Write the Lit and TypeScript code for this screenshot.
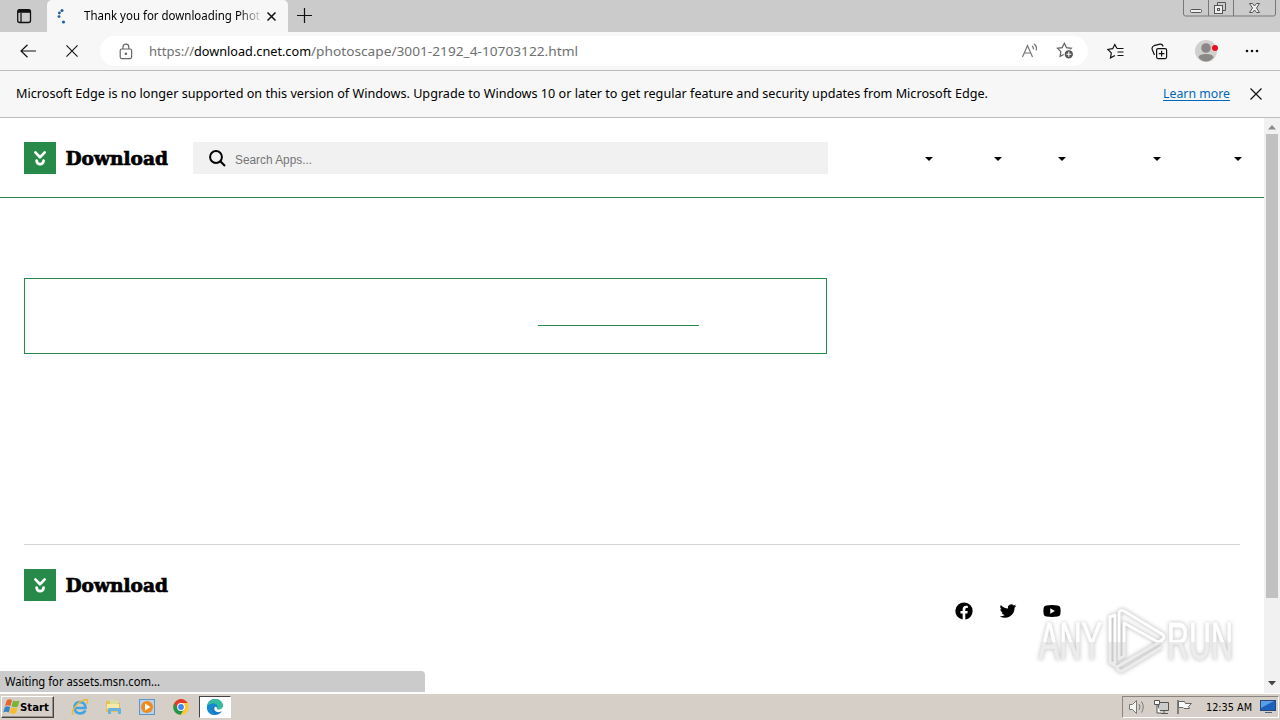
import { LitElement, css, html, svg } from 'lit';
import { customElement, property } from 'lit/decorators.js';

// One line of text set to an exact advance width.
@customElement('fit-text')
export class FitText extends LitElement {
  @property({ type: String })
  text : string = '';

  @property({ type: Number })
  width : number = 100;

  render() {
    return html`<svg width=${this.width} height="20">
      <text x="0" y="15" textLength=${this.width} lengthAdjust="spacingAndGlyphs">${this.text}</text>
    </svg>`;
  }

  static styles = css`
    :host { display: block; flex: none; height: 20px; }
    svg { display: block; overflow: visible; }
    text { fill: currentColor; white-space: pre; }
  `;
}

@customElement('download-logo')
export class DownloadLogo extends LitElement {
  render() {
    return html`
      <svg class="mark" width="32" height="32" viewBox="0 0 32 32">
        <rect width="32" height="32" fill="#278a4b"/>
        <g fill="none" stroke="#fff" stroke-width="2.7" stroke-linecap="round" stroke-linejoin="round">
          <path d="M11.4 10.4 16 15.2l4.7-4.8"/>
          <path d="M12.6 18.6c.5 4.7 6.5 4.7 7 0"/>
        </g>
      </svg>
      <svg class="word" width="104" height="32">
        <text x="0.5" y="23" textLength="102.5" lengthAdjust="spacingAndGlyphs">Download</text>
      </svg>`;
  }

  static styles = css`
    :host { display: flex; gap: 9px; width: 145px; height: 32px; flex: none; }
    .word { overflow: visible; }
    text {
      font: 700 19px "DejaVu Serif", serif;
      stroke: #000;
      stroke-width: 0.7px;
    }
  `;
}

const starPath = 'M7 1.2 8.9 5l4.3.6-3.1 3 .7 4.2L7 10.8l-3.8 2 .7-4.2-3.1-3L5.1 5z';

@customElement('browser-chrome')
export class BrowserChrome extends LitElement {
  render() {
    return html`
      <div class="tabs">
        <svg class="actions" width="16" height="16" viewBox="0 0 16 16" fill="none" stroke="#111" stroke-width="1.3">
          <rect x="1.7" y="1.7" width="12.8" height="12.8" rx="2"/>
          <path d="M2 3.3h12.4" stroke-width="3"/><path d="M5 5v9"/>
        </svg>
        <div class="tab">
          <svg class="spinner" width="16" height="16" viewBox="0 0 16 16" fill="#245f9e">
            <circle cx="7" cy="2.4" r="1.5"/><circle cx="4.4" cy="5" r="1.4"/>
            <circle cx="4" cy="8.6" r="1.4"/><circle cx="8.5" cy="14" r="1.6"/>
          </svg>
          <fit-text class="title" text="Thank you for downloading Phot" width="176"></fit-text>
          <svg class="close" width="9" height="9" viewBox="0 0 9 9" stroke="#111" stroke-width="1.5"><path d="m.5.5 8 8m0-8-8 8"/></svg>
        </div>
        <svg class="plus" width="15" height="15" viewBox="0 0 15 15" stroke="#111" stroke-width="1.2"><path d="M7.5 0v15M0 7.5h15"/></svg>
        <svg class="controls" width="94" height="17" viewBox="0 0 94 17" fill="none" stroke="#777">
          <path d="M.5 0v14q0 2 2 2h88q2 0 2-2V0M25.500 0v16M50.500 0v16"/>
          <g stroke="#555">
            <rect x="7.500" y="9.500" width="11" height="3" rx="1" fill="#eee"/>
            <path d="M34.500 5V2.500h8v8H40"/><rect x="31.500" y="5.500" width="8" height="8" fill="#eee"/>
            <rect x="34.500" y="8.500" width="2" height="2"/>
            <path d="M66.500 3.500h3l2 2.500 2-2.500h3L73.500 8l3 4.500h-3l-2-2.500-2 2.500h-3l3-4.500z" fill="#eee"/>
          </g>
        </svg>
      </div>
      <div class="toolbar">
        <svg class="back" width="17" height="14" viewBox="0 0 17 14" fill="none" stroke="#111" stroke-width="1.2"><path d="M16 7H1m6.500-6.300L1 7l6.500 6.300"/></svg>
        <svg class="stop" width="12" height="12" viewBox="0 0 13 13" stroke="#111" stroke-width="1.2"><path d="m.5.5 12 12m0-12-12 12"/></svg>
        <div class="address">
          <svg class="lock" width="14" height="17" viewBox="0 0 14 17" fill="none" stroke="#666" stroke-width="1.2">
            <rect x="1.200" y="6" width="11.400" height="9.600" rx="1.500"/><path d="M4 6V4a2.900 2.900 0 0 1 5.800 0v2"/><circle cx="6.900" cy="10.700" r=".7" fill="#666"/>
          </svg>
          <div class="url">
            <fit-text class="dim" text="https://" width="45"></fit-text>
            <fit-text text="download.cnet.com" width="117"></fit-text>
            <fit-text class="dim" text="/photoscape/3001-2192_4-10703122.html" width="267"></fit-text>
          </div>
          <svg class="read" width="17" height="16" viewBox="0 0 17 16" fill="none" stroke="#777" stroke-width="1.200">
            <path d="M1.500 14 6.500 2.500l5 11.500M3.300 10h6.400M11 3q1.800 1.300 1.300 3.300M13 .8q3.500 2.800 2 6.700"/>
          </svg>
          <svg class="fav" width="18" height="18" viewBox="0 0 18 18" fill="none" stroke="#666" stroke-width="1.100">
            <path d=${starPath} transform="translate(.5 0) scale(1.120)"/>
            <circle cx="12.800" cy="12.300" r="4.700" fill="#555" stroke="#fff"/><path d="M12.800 9.800v5m-2.500-2.500h5" stroke="#fff"/>
          </svg>
        </div>
        <svg class="favs" width="18" height="17" viewBox="0 0 18 17" fill="none" stroke="#111" stroke-width="1.200">
          <path d="M10 5.500 7.800 1.500 5.700 5.700l-4.900.8 3.500 3.400-.8 5 4.500-2.400"/><path d="M10 5.500h6.500M10.500 9h6M10.500 12.500h6"/>
        </svg>
        <svg class="collections" width="17" height="17" viewBox="0 0 17 17" fill="none" stroke="#111" stroke-width="1.200">
          <rect x="5.600" y="5.600" width="10" height="10" rx="1.500"/><path d="M10.600 7.800v5.600m-2.800-2.800h5.600M3.500 12 1.200 6.500Q.5 3.500 3 2.700l6-1.500q2.500-.3 3 2.300"/>
        </svg>
        <svg class="avatar" width="24" height="24" viewBox="0 0 24 24">
          <circle cx="11" cy="12" r="11" fill="#d2d0ce"/><circle cx="11" cy="9" r="4.800" fill="#8a8886"/>
          <path d="M3.500 18.500q0-3.500 7.500-3.500t7.500 3.500q-3 4-7.500 4t-7.500-4" fill="#8a8886"/>
          <circle cx="20" cy="9" r="3" fill="#e81123"/>
        </svg>
        <svg class="more" width="14" height="4" viewBox="0 0 14 4" fill="#111"><circle cx="2" cy="2" r="1.300"/><circle cx="7" cy="2" r="1.300"/><circle cx="12" cy="2" r="1.300"/></svg>
      </div>
      <div class="notice">
        <fit-text text="Microsoft Edge is no longer supported on this version of Windows. Upgrade to Windows 10 or later to get regular feature and security updates from Microsoft Edge." width="972"></fit-text>
        <span class="learn"><fit-text text="Learn more" width="67"></fit-text></span>
        <svg width="12" height="12" viewBox="0 0 12 12" stroke="#111" stroke-width="1.200"><path d="m.5.5 11 11m0-11-11 11"/></svg>
      </div>`;
  }

  static styles = css`
    :host { display: block; font: 13px "Noto Sans", sans-serif; color: #000; }
    svg { flex: none; display: block; }
    .tabs { display: flex; height: 32px; background: #cbcbcb; box-sizing: border-box; }
    .actions { margin: 8px 7px 0 16px; }
    .tab {
      display: flex;
      width: 241px;
      margin-left: 8px;
      background: #f7f7f7;
      border-radius: 5px 5px 0 0;
    }
    .spinner { margin: 8px 0 0 8px; }
    .title {
      margin: 5px 0 0 13px;
      font-size: 12px;
      -webkit-mask-image: linear-gradient(90deg, #000 155px, transparent 179px);
      mask-image: linear-gradient(90deg, #000 155px, transparent 179px);
    }
    .close { margin: 12px 0 0 7px; }
    .plus { margin: 8px 0 0 9px; }
    .controls { margin: 0 3px 0 auto; }
    .toolbar {
      display: flex;
      align-items: center;
      height: 39px;
      box-sizing: border-box;
      background: #f7f7f7;
      border-bottom: 1px solid #bcbcbc;
    }
    .back { margin-left: 20px; }
    .stop { margin-left: 29px; }
    .address {
      display: flex;
      align-items: center;
      width: 988px;
      height: 30px;
      margin-left: 22px;
      background: #fff;
      border-radius: 15px;
    }
    .lock { margin-left: 19px; }
    .url { display: flex; margin-left: 16px; width: 429px; }
    .dim { color: #707070; }
    .read { margin-left: 443px; }
    .fav { margin-left: 18px; }
    .favs { margin-left: 19px; }
    .collections { margin-left: 26px; }
    .avatar { margin-left: 27px; }
    .more { margin-left: 26px; }
    .notice {
      display: flex;
      align-items: center;
      height: 47px;
      box-sizing: border-box;
      padding: 0 18px 0 16px;
      background: #f7f7f7;
      border-bottom: 1px solid #bcbcbc;
    }
    .notice fit-text { margin-top: -3px; }
    .learn {
      height: 13px;
      margin: 0 20px 0 auto;
      color: #0067b8;
      border-bottom: 1px solid;
    }
    .notice .learn fit-text { margin-top: -4px; }
  `;
}

@customElement('site-page')
export class SitePage extends LitElement {
  caret() {
    return html`<svg width="8" height="4" viewBox="0 0 8 4"><path d="M0 0h8L4 4z"/></svg>`;
  }

  render() {
    return html`
      <div class="page">
        <header>
          <download-logo></download-logo>
          <div class="search">
            <svg width="17" height="17" viewBox="0 0 17 17" fill="none" stroke="#000" stroke-width="2"><circle cx="7" cy="7" r="5.900"/><path d="m11.300 11.300 4.700 4.700"/></svg>
            <fit-text text="Search Apps..." width="77"></fit-text>
          </div>
          <nav>${[1, 2, 3, 4, 5].map(() => this.caret())}</nav>
        </header>
        <div class="message"><span class="link"></span></div>
        <footer>
          <download-logo></download-logo>
          <div class="social">
            <svg width="18" height="18" viewBox="-.5 -.5 25 25"><path d="M24 12a12 12 0 1 0-13.900 11.900v-8.400H7.100V12h3V9.400c0-3 1.800-4.700 4.500-4.700 1.300 0 2.700.2 2.700.2v3h-1.500c-1.500 0-2 .9-2 1.900V12h3.400l-.5 3.500h-2.900v8.400A12 12 0 0 0 24 12z"/></svg>
            <svg width="18" height="18" viewBox="-1 -1 26 26"><path d="M24 4.600a10 10 0 0 1-2.800.8 5 5 0 0 0 2.200-2.700 10 10 0 0 1-3.100 1.200 4.900 4.900 0 0 0-8.400 4.500A14 14 0 0 1 1.700 3.200a4.900 4.900 0 0 0 1.500 6.600 5 5 0 0 1-2.200-.6 4.900 4.900 0 0 0 3.900 4.900 5 5 0 0 1-2.200.1 4.900 4.900 0 0 0 4.600 3.400A10 10 0 0 1 0 19.500 14 14 0 0 0 21.500 7.100 10 10 0 0 0 24 4.600z"/></svg>
            <svg width="18" height="18" viewBox="-.5 -.5 25 25"><path fill-rule="evenodd" d="M4 4.200Q12 3 20 4.200q3.200.3 3.600 3.200.8 4.600 0 9.200-.4 2.900-3.600 3.200-8 1.200-16 0-3.200-.3-3.600-3.200-.8-4.600 0-9.200Q.8 4.500 4 4.200zM9.600 8.300v7.400L16 12z"/></svg>
          </div>
        </footer>
      </div>
      <div class="scrollbar">
        <svg width="8" height="5" viewBox="0 0 8 5" fill="#8a8a8a"><path d="M4 0 8 4.500H0z"/></svg>
        <span class="thumb"></span>
        <svg width="8" height="5" viewBox="0 0 8 5" fill="#444"><path d="M0 0h8L4 4.500z"/></svg>
      </div>`;
  }

  static styles = css`
    :host { display: flex; height: 575px; overflow: hidden; background: #fff; }
    .page { width: 1264px; }
    svg { display: block; flex: none; }
    header {
      display: flex;
      height: 80px;
      box-sizing: border-box;
      padding: 24px 22px 0 24px;
      border-bottom: 1px solid #278a4b;
    }
    .search {
      display: flex;
      width: 635px;
      height: 32px;
      margin-left: 24px;
      box-sizing: border-box;
      padding: 8px 0 0 16px;
      gap: 9px;
      background: #f1f1f1;
      color: #757575;
      font: 12px "Liberation Sans", sans-serif;
    }
    .search fit-text { margin-top: -1px; }
    nav { display: flex; margin: 15px 0 0 97px; }
    nav svg:nth-child(2) { margin-left: 61px; }
    nav svg:nth-child(3) { margin-left: 56px; }
    nav svg:nth-child(4) { margin-left: 87px; }
    nav svg:nth-child(5) { margin-left: 73px; }
    .message {
      width: 803px;
      height: 76px;
      margin: 80px 0 0 24px;
      box-sizing: border-box;
      padding: 46px 0 0 513px;
      border: 1px solid #278a4b;
    }
    .link { display: block; width: 161px; height: 1px; background: #278a4b; }
    footer {
      display: flex;
      margin: 190px 24px 0;
      padding-top: 24px;
      border-top: 1px solid #d5d5d5;
    }
    .social { display: flex; gap: 26px; margin: 33px 0 0 786px; }
    .scrollbar {
      display: flex;
      flex-direction: column;
      align-items: center;
      width: 16px;
      box-sizing: border-box;
      padding: 7px 0 6px;
      background: #f1f1f1;
    }
    .thumb { width: 12px; height: 464px; margin: 4px 0 83px; background: #c1c1c1; }
  `;
}

@customElement('task-bar')
export class TaskBar extends LitElement {
  render() {
    return html`
      <div class="start">
        <svg width="17" height="15" viewBox="0 0 17 15">
          <path d="M4 1q3-1.500 5 0L7.500 7Q5 5.500 2 7z" fill="#e8632b"/><path d="M10 1.500q3 1.500 6.500 0L15 7.500q-3 1.500-6.500 0z" fill="#77b43a"/>
          <path d="M1.800 8q3-1.500 5.400 0L5.800 13.500Q3 12 .3 13.500z" fill="#3b83c8"/><path d="M8 8.500q3 1.500 6.500 0L13 14q-3 1.500-6.500 0z" fill="#f5bd2c"/>
        </svg>
        <fit-text text="Start" width="29"></fit-text>
      </div>
      <div class="apps">
        <svg width="18" height="18" viewBox="0 0 18 18" fill="none">
          <path d="M14.500 12.500q-2 3-5.500 3-5.500-.5-5.500-6T9 4q5.500.5 5.500 6H5" stroke="#41a5df" stroke-width="2.600"/>
          <path d="M3 16Q-1 16 4 9T15.500 1.500Q18 2 15.500 6" stroke="#e8b83a" stroke-width="1.300"/>
        </svg>
        <svg width="18" height="18" viewBox="0 0 18 18">
          <path d="M1 3h5l1 2h8v9H1z" fill="#e5c05a"/><path d="M2 6h12v5H2z" fill="#f8e9a8"/><path d="M5 2h8v4H5z" fill="#d9dfa0"/>
          <path d="M3 16v-5q0-1 1-1h11q1 0 1 1v5h-3v-3H6v3z" fill="#69b2df"/>
        </svg>
        <svg width="18" height="18" viewBox="0 0 18 18">
          <rect x="1.500" y="1.500" width="15" height="15" fill="#b5d3ec" stroke="#5e96c8"/><circle cx="9" cy="9" r="6" fill="#f18a1d"/><path d="m7 5.500 5.500 3.500L7 12.500z" fill="#fff"/>
        </svg>
        <svg width="18" height="18" viewBox="0 0 18 18">
          <circle cx="9" cy="9" r="7.800" fill="#fcc934"/><path d="M2.300 5A7.800 7.800 0 0 0 8.800 16.800L12 11 9 9z" fill="#23964c"/>
          <path d="M2.300 5A7.800 7.800 0 0 1 15.800 5H9v4H4.500z" fill="#e33b2e"/><circle cx="9" cy="9" r="3.900" fill="#fff"/><circle cx="9" cy="9" r="2.900" fill="#4285f4"/>
        </svg>
        <div class="active">
          <svg width="18" height="18" viewBox="0 0 18 18">
            <circle cx="9" cy="9" r="8" fill="#1477c9"/>
            <path d="M1 8.500C2 3.500 5.500 1 9.500 1 14 1 17 4.500 17 8c0 3-3 4-5 3.500-1.500-.5-1-1.500-.5-2.500C11.500 5 5 4 1 8.500z" fill="#35bd9b"/>
            <path d="M1 8.500C5 4 11 5 11.500 8.500 7.500 6.500 5 10 7 14 8 16 10 17 9 17 4 17 .5 13.500 1 8.500z" fill="#1689d0"/>
            <path d="M9 8.500q-2 3 1 5 3 1.500 6-.5l1.500 1V8q-2 4-5.500 3.500-2-.3-1-2z" fill="#fff"/>
          </svg>
        </div>
      </div>
      <div class="tray">
        <svg width="18" height="16" viewBox="0 0 18 16" fill="#f4f4f0" stroke="#777"><path d="M1.500 5.500h3l4-4v13l-4-4h-3z"/><path d="M11 5q2 3 0 6m2.500-8.500q3.500 5.500 0 11" fill="none" stroke="#777"/></svg>
        <svg width="17" height="16" viewBox="0 0 17 16" fill="#ccc" stroke="#555"><path d="M5.500 3.500h10v8h-10zM8 14.500h7M11 12v2"/><path d="M1.500 1.500h5v4h-5zM4 6v8h4" fill="#fff"/></svg>
        <svg width="17" height="16" viewBox="0 0 17 16" fill="#fafafa" stroke="#666"><path d="M2 1v14" stroke-width="1.500"/><path d="M2.500 2.500h6l1 2h6l-3 3 1 2H8l-1-1H2.500z"/></svg>
        <fit-text text="12:35 AM" width="46"></fit-text>
        <svg width="16" height="14" viewBox="0 0 16 14"><rect x=".5" y=".5" width="15" height="10" fill="#1c62bd" stroke="#29497a"/><path d="M1 1h13L1 8z" fill="#5b9de7"/><path d="M5 12.500h7" stroke="#4a5f7d"/></svg>
      </div>`;
  }

  static styles = css`
    :host {
      display: flex;
      align-items: center;
      height: 27px;
      box-sizing: border-box;
      padding: 0 1px 1px 1px;
      border-top: 1px solid #fff;
      background: #d6cfc7;
      font: 11px "DejaVu Sans Condensed", "DejaVu Sans", sans-serif;
    }
    svg { display: block; flex: none; }
    .start {
      display: flex;
      align-items: center;
      width: 53px;
      height: 22px;
      box-sizing: border-box;
      padding-left: 1px;
      border: 1px solid;
      border-color: #fff #444 #444 #fff;
      box-shadow: inset -1px -1px #969087;
      font-weight: bold;
    }
    .start fit-text { margin-top: -1px; }
    .apps { display: flex; align-items: center; gap: 16px; margin-left: 17px; }
    .apps > svg:nth-child(1), .apps > svg:nth-child(2) { margin-right: -0.5px; }
    .active {
      display: flex;
      align-items: center;
      justify-content: center;
      width: 32px;
      height: 22px;
      margin-left: -7px;
      box-sizing: border-box;
      border: 1px solid;
      border-color: #444 #fff #fff #444;
      background: #fdfdfd;
    }
    .tray {
      display: flex;
      align-items: center;
      width: 157px;
      height: 22px;
      margin-left: auto;
      box-sizing: border-box;
      padding-left: 5px;
      border: 1px solid;
      border-color: #8a857e #fff #fff #8a857e;
    }
    .tray svg:nth-child(2) { margin-left: 7px; }
    .tray svg:nth-child(3) { margin-left: 6px; }
    .tray fit-text { margin: -2px 8px 0 13px; }
  `;
}

@customElement('app-root')
export class AppRoot extends LitElement {
  watermark() {
    const mark = svg`
      <path d="M77 58V12l5-2v48z"/>
      <path d="M91 6q-5-2-5 3v45l5-3V18l34 19 4-2q4-3 0-6z"/>
      <path d="m78 58 6 4 46-27M84 63q3 5 7 2l38-23"/>`;
    return html`<svg class="watermark" width="206" height="74" viewBox="0 0 206 74">
      <defs>
        <linearGradient id="fade" gradientUnits="userSpaceOnUse" x1="0" x2="0" y1="0" y2="74">
          <stop offset=".5" stop-color="#fff"/><stop offset=".5" stop-color="#ececec"/>
        </linearGradient>
      </defs>
      <g class="letters">
        <text x="6" y="54" textLength="63" lengthAdjust="spacingAndGlyphs">ANY</text>
        <text x="134" y="54" textLength="66" lengthAdjust="spacingAndGlyphs">RUN</text>
      </g>
      <g class="symbol">${mark}</g>
    </svg>`;
  }

  render() {
    return html`
      <browser-chrome></browser-chrome>
      <site-page></site-page>
      <task-bar></task-bar>
      <div class="status"><fit-text text="Waiting for assets.msn.com..." width="155"></fit-text></div>
      ${this.watermark()}`;
  }

  static styles = css`
    :host {
      display: block;
      position: relative;
      width: 1280px;
      height: 720px;
      overflow: hidden;
      background: #fff;
    }
    .status {
      position: absolute;
      left: 0;
      bottom: 28px;
      width: 425px;
      height: 21px;
      box-sizing: border-box;
      padding-left: 5px;
      background: #cbcbcb;
      border-radius: 0 4px 0 0;
      font: 12px "Noto Sans", sans-serif;
    }
    .watermark { position: absolute; left: 1033px; top: 605px; overflow: visible; }
    .letters {
      font: 52px "Liberation Sans", sans-serif;
      fill: url(#fade);
      stroke: url(#fade);
      stroke-width: 1;
      filter: drop-shadow(0 0 2px #bbb);
    }
    .symbol {
      fill: none;
      stroke: url(#fade);
      stroke-width: 3;
      stroke-linejoin: round;
      filter: drop-shadow(0 0 2px #aaa);
    }
  `;
}

declare global {
  interface HTMLElementTagNameMap {
    'app-root': AppRoot
  }
}
